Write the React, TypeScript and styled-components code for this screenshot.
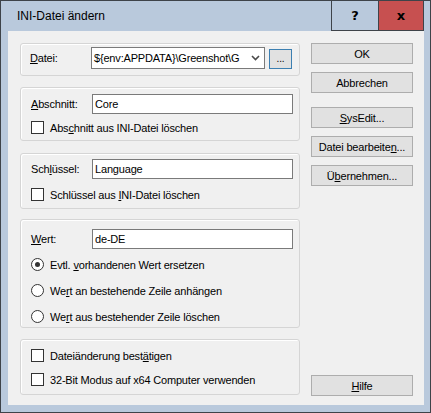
import React from 'react';
import styled, { createGlobalStyle } from 'styled-components';

const GlobalStyle = createGlobalStyle`
  html, body {
    margin: 0;
    padding: 0;
    background: #ffffff;
  }
  body {
    font-family: "Liberation Sans", Arial, sans-serif;
    font-size: 11px;
    letter-spacing: -0.18px;
    color: #000;
  }
`;

const Window = styled.div`
  width: 431px;
  height: 413px;
  box-sizing: border-box;
  border: 1px solid #3e4349;
  background: #b9c9dc;
  display: flex;
  flex-direction: column;
`;

const TitleBar = styled.div`
  height: 30px;
  flex-shrink: 0;
  display: flex;
  align-items: stretch;
  padding-right: 6px;
`;

const Title = styled.div`
  flex: 1;
  padding-left: 16px;
  display: flex;
  align-items: center;
  font-size: 12px;
  letter-spacing: 0;
  color: #000;
`;

const CaptionButton = styled.div<{ $close?: boolean }>`
  width: ${(p) => (p.$close ? 46 : 47)}px;
  box-sizing: border-box;
  display: flex;
  align-items: center;
  justify-content: center;
  margin-top: -1px;
  font-weight: bold;
  font-size: 13px;
  letter-spacing: 0;
  font-family: "DejaVu Sans", "Liberation Sans", sans-serif;
  background: ${(p) => (p.$close ? '#c75050' : 'transparent')};
  border-left: 1px solid #3e4349;
  border-bottom: 1px solid #3e4349;
  border-top: 1px solid #3e4349;
  ${(p) => p.$close && 'border-right: 1px solid #3e4349;'}
`;

const Client = styled.div`
  flex: 1;
  margin: 0 6px 7px 7px;
  background: #f0f0f0;
  display: flex;
  padding: 12px 10px 9px 12px;
  gap: 11px;
`;

const LeftColumn = styled.div`
  width: 280px;
  display: flex;
  flex-direction: column;
`;

const Group = styled.div<{ $mt?: number; $pt: number; $pb: number }>`
  margin-top: ${(p) => p.$mt ?? 0}px;
  padding: ${(p) => p.$pt}px 6px ${(p) => p.$pb}px 10px;
  border: 1px solid #d5d5d5;
  border-radius: 3px;
  box-shadow: inset 1px 1px 0 #ffffff;
  display: flex;
  flex-direction: column;
`;

const FieldRow = styled.div<{ $h: number }>`
  height: ${(p) => p.$h}px;
  display: flex;
  align-items: center;
`;

const FieldLabel = styled.label`
  width: 61px;
  flex-shrink: 0;
`;

const TextBox = styled.div`
  width: 201px;
  height: 20px;
  box-sizing: border-box;
  border: 1px solid #7a7a7a;
  background: #fff;
  padding-left: 2px;
  display: flex;
  align-items: center;
`;

const Combo = styled.div`
  width: 174px;
  height: 22px;
  box-sizing: border-box;
  border: 1px solid #7a7a7a;
  background: #fff;
  display: flex;
  align-items: center;
`;

const ComboText = styled.div`
  flex: 1;
  overflow: hidden;
  white-space: nowrap;
  padding-left: 2px;
`;

const ComboArrow = styled.div`
  width: 17px;
  height: 100%;
  display: flex;
  align-items: center;
  justify-content: center;
  flex-shrink: 0;
`;

const BrowseButton = styled.div`
  width: 23px;
  height: 20px;
  box-sizing: border-box;
  margin-left: 4px;
  margin-top: 2px;
  border: 1px solid #3c7fb1;
  background: #e1e1e1;
  display: flex;
  align-items: center;
  justify-content: center;
  font-size: 10px;
  padding-bottom: 2px;
`;

const OptionRow = styled.div<{ $mt: number }>`
  margin-top: ${(p) => p.$mt}px;
  height: 13px;
  display: flex;
  align-items: center;
  gap: 6px;
  white-space: nowrap;
`;

const CheckMark = styled.div`
  width: 13px;
  height: 13px;
  box-sizing: border-box;
  border: 1px solid #333;
  background: #fff;
  flex-shrink: 0;
`;

const RadioMark = styled.div<{ $checked?: boolean }>`
  width: 13px;
  height: 13px;
  box-sizing: border-box;
  border: 1px solid #333;
  border-radius: 50%;
  background: #fff;
  flex-shrink: 0;
  display: flex;
  align-items: center;
  justify-content: center;

  &::after {
    content: '';
    width: 5px;
    height: 5px;
    border-radius: 50%;
    background: ${(p) => (p.$checked ? '#333' : 'transparent')};
  }
`;

const RightColumn = styled.div`
  width: 102px;
  display: flex;
  flex-direction: column;
`;

const Button = styled.div<{ $mt?: number; $auto?: boolean }>`
  height: 21px;
  box-sizing: border-box;
  margin-top: ${(p) => (p.$auto ? 'auto' : `${p.$mt ?? 0}px`)};
  border: 1px solid #adadad;
  background: #e1e1e1;
  display: flex;
  align-items: center;
  justify-content: center;
  white-space: nowrap;
`;

const U = styled.span`
  text-decoration: underline;
  text-underline-offset: 1px;
`;

const App: React.FC = () => {
  return (
    <>
      <GlobalStyle />
      <Window>
        <TitleBar>
          <Title>INI-Datei ändern</Title>
          <CaptionButton>?</CaptionButton>
          <CaptionButton $close>x</CaptionButton>
        </TitleBar>
        <Client>
          <LeftColumn>
            <Group $pt={3} $pb={6}>
              <FieldRow $h={22}>
                <FieldLabel style={{ marginLeft: -1 }}>
                  <U>D</U>atei:
                </FieldLabel>
                <Combo>
                  <ComboText>{'${env:APPDATA}\\Greenshot\\G'}</ComboText>
                  <ComboArrow>
                    <svg width="9" height="6" viewBox="0 0 9 6">
                      <path d="M1 1 L4.5 4.5 L8 1" fill="none" stroke="#4a4a4a" strokeWidth="1.6" />
                    </svg>
                  </ComboArrow>
                </Combo>
                <BrowseButton>...</BrowseButton>
              </FieldRow>
            </Group>

            <Group $mt={11} $pt={6} $pb={6}>
              <FieldRow $h={20}>
                <FieldLabel>
                  <U>A</U>bschnitt:
                </FieldLabel>
                <TextBox>Core</TextBox>
              </FieldRow>
              <OptionRow $mt={7}>
                <CheckMark />
                <span>
                  Abs<U>c</U>hnitt aus INI-Datei löschen
                </span>
              </OptionRow>
            </Group>

            <Group $mt={12} $pt={5} $pb={7}>
              <FieldRow $h={20}>
                <FieldLabel>
                  Sch<U>l</U>üssel:
                </FieldLabel>
                <TextBox>Language</TextBox>
              </FieldRow>
              <OptionRow $mt={9}>
                <CheckMark />
                <span>
                  Schlüssel aus <U>I</U>NI-Datei löschen
                </span>
              </OptionRow>
            </Group>

            <Group $mt={10} $pt={9} $pb={4}>
              <FieldRow $h={20}>
                <FieldLabel>
                  <U>W</U>ert:
                </FieldLabel>
                <TextBox>de-DE</TextBox>
              </FieldRow>
              <OptionRow $mt={9}>
                <RadioMark $checked />
                <span>
                  Evtl. <U>v</U>orhandenen Wert ersetzen
                </span>
              </OptionRow>
              <OptionRow $mt={13}>
                <RadioMark />
                <span>
                  We<U>r</U>t an bestehende Zeile anhängen
                </span>
              </OptionRow>
              <OptionRow $mt={13}>
                <RadioMark />
                <span>
                  We<U>r</U>t aus bestehender Zeile löschen
                </span>
              </OptionRow>
            </Group>

            <Group $mt={11} $pt={9} $pb={8}>
              <OptionRow $mt={0}>
                <CheckMark />
                <span>
                  Dateiänderung best<U>ä</U>tigen
                </span>
              </OptionRow>
              <OptionRow $mt={11}>
                <CheckMark />
                <span>32-Bit Modus auf x64 Computer verwenden</span>
              </OptionRow>
            </Group>
          </LeftColumn>

          <RightColumn>
            <Button>OK</Button>
            <Button $mt={8}>Abbrechen</Button>
            <Button $mt={14}>
              <span>
                <U>S</U>ysEdit...
              </span>
            </Button>
            <Button $mt={8}>
              <span>
                Datei bearbeite<U>n</U>...
              </span>
            </Button>
            <Button $mt={8}>
              <span>
                Ü<U>b</U>ernehmen...
              </span>
            </Button>
            <Button $auto>
              <span>
                <U>H</U>ilfe
              </span>
            </Button>
          </RightColumn>
        </Client>
      </Window>
    </>
  );
};

export default App;
